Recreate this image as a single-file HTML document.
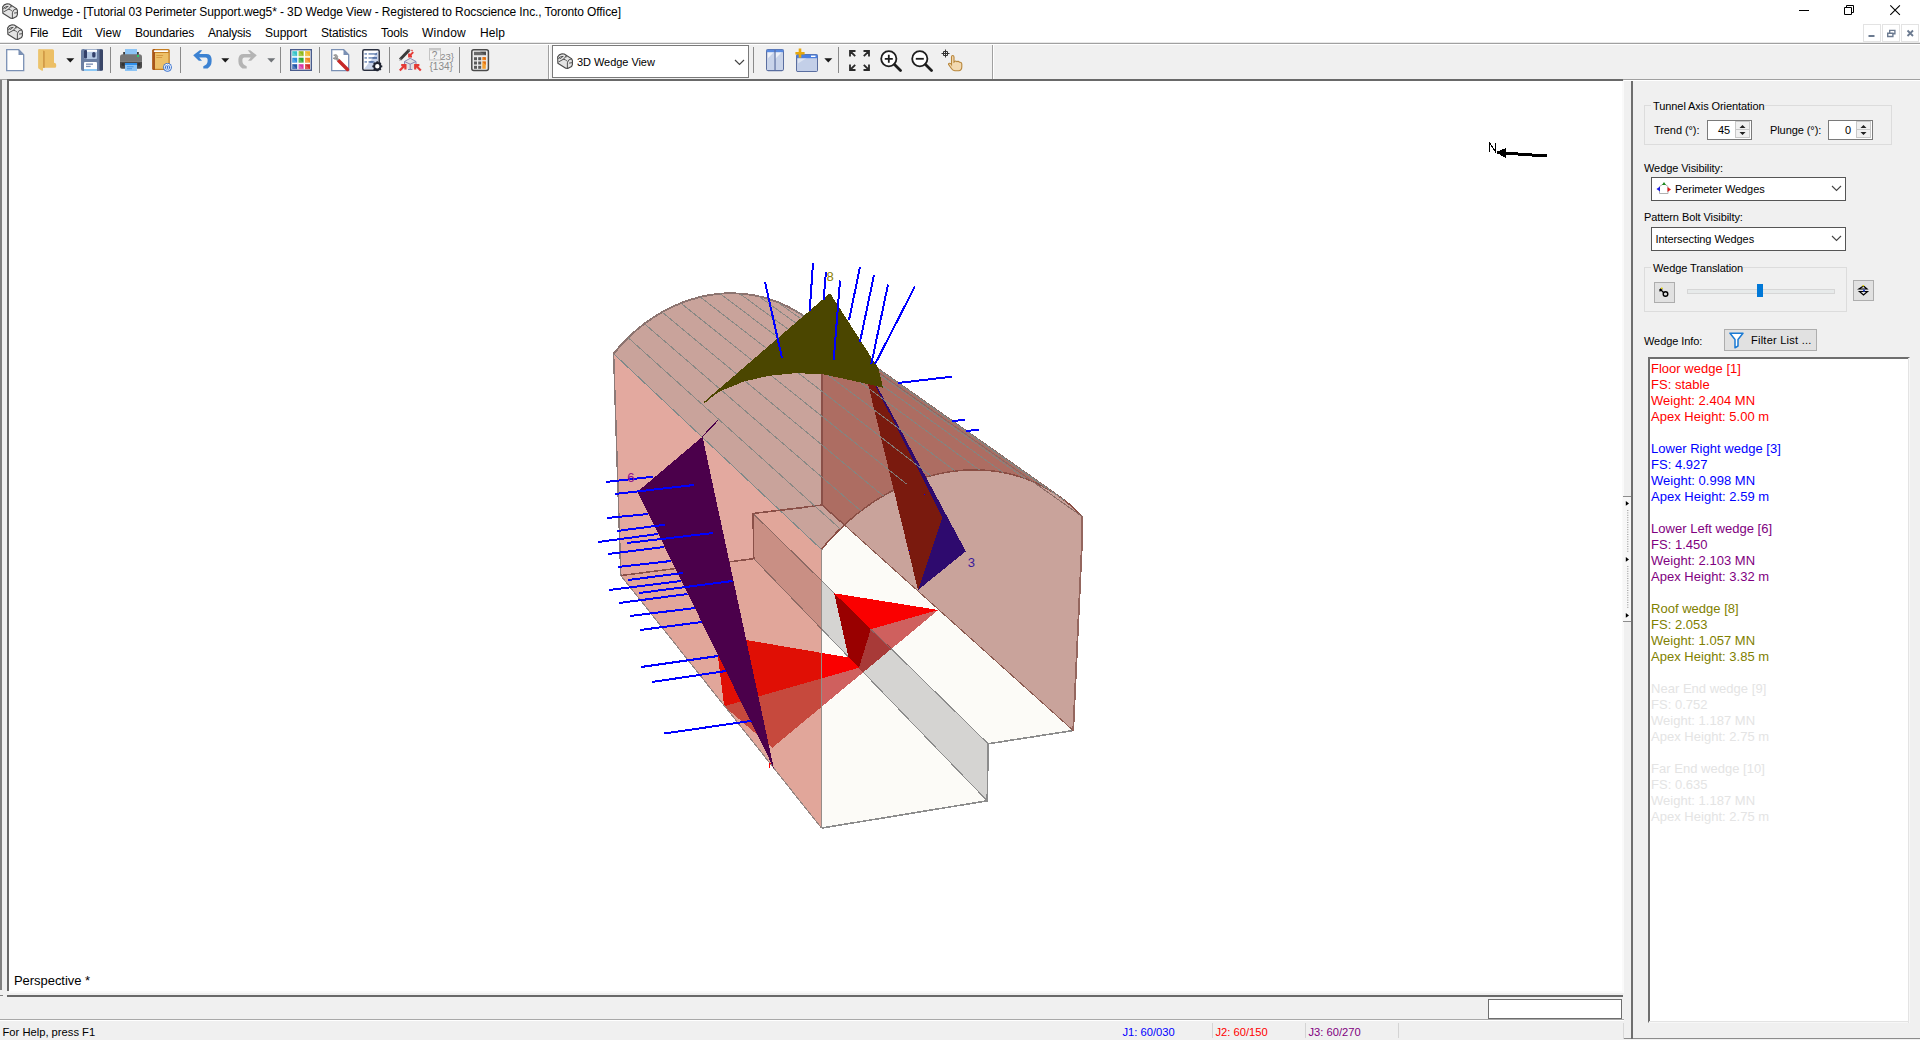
<!DOCTYPE html>
<html><head><meta charset="utf-8"><title>Unwedge</title>
<style>
html,body{margin:0;padding:0;}
body{width:1920px;height:1040px;overflow:hidden;background:#f0f0f0;font-family:"Liberation Sans", sans-serif;font-size:12px;color:#000;position:relative;}
.abs{position:absolute;white-space:nowrap;}
.mi{font-size:12px;line-height:15px;text-align:center;}
.t11{font-size:11px;line-height:14px;letter-spacing:-0.08px;}
</style></head><body>
<div class="abs" style="left:9px;top:81px;width:1613px;height:910px;background:#fff"></div>
<svg id="model" width="1614" height="912" viewBox="9 81 1614 912" style="position:absolute;left:9px;top:81px" shape-rendering="crispEdges">
<polygon points="821.5,828.1 987.2,800.8 753.8,558.7 620.8,575.5" fill="#fcfbf7"/>
<polygon points="988.2,743.8 1073.2,730.5 822.0,505.0 753.0,513.5" fill="#fcfbf7"/>
<polygon points="988.2,743.8 987.2,800.8 753.8,558.7 753.0,513.5" fill="#d5d4d2"/>
<g stroke="#8c8c8c" stroke-width="1" fill="none">
<polyline points="821.5,828.1 987.2,800.8 988.2,743.8 1073.2,730.5" stroke-width="1.6"/>
<line x1="987.2" y1="800.8" x2="753.8" y2="558.7"/>
<line x1="988.2" y1="743.8" x2="753.0" y2="513.5"/>
</g>
<polygon points="834.2,593.3 938.3,610.0 870.8,629.2" fill="#fa0000"/>
<polygon points="834.2,593.3 870.8,629.2 859.0,667.7 848.6,657.5" fill="#990000"/>
<polygon points="848.6,657.5 859.0,667.7 724.2,706.2 718.0,656.8 735.0,637.5 746.8,640.1" fill="#fa0000"/>
<polygon points="938.3,610.0 870.8,629.2 859.0,667.7 724.2,706.2 772.2,747.8" fill="rgb(179,0,0)" fill-opacity="0.62"/>
<polygon points="870.8,629.2 891.3,649.0 863.3,672.2 859.0,667.7" fill="#a83a38"/>
<line x1="870.8" y1="629.2" x2="891.3" y2="649.0" stroke="#8a6464" stroke-width="1"/>
<polygon points="844.7,525.2 1073.2,730.5 1082.4,534.0 1081.8,516.3 1081.8,516.3 1079.9,514.2 1077.9,512.1 1075.8,510.1 1073.7,508.2 1071.6,506.3 1069.5,504.4 1067.3,502.5 1065.1,500.8 1062.8,499.0 1060.5,497.3 1058.2,495.7 1055.8,494.1 1053.4,492.5 1051.0,491.0 1048.6,489.5 1046.1,488.1 1043.6,486.7 1041.0,485.4 1038.5,484.2 1035.9,483.0 1033.3,481.8 1030.6,480.7 1027.9,479.6 1025.3,478.6 1022.5,477.7 1019.8,476.8 1017.0,475.9 1014.2,475.1 1011.4,474.4 1008.6,473.7 1005.8,473.1 1002.9,472.5 1000.0,472.0 997.1,471.5 994.2,471.1 991.3,470.8 988.3,470.5 985.4,470.3 982.4,470.1 979.4,470.0 976.4,469.9 973.4,469.9 970.4,469.9 967.4,470.0 964.3,470.2 961.3,470.4 958.3,470.7 955.2,471.0 952.2,471.4 949.1,471.9 946.1,472.4 943.0,473.0 940.0,473.6 936.9,474.2 933.9,475.0 930.8,475.8 927.8,476.6 924.7,477.5 921.7,478.5 918.7,479.5 915.6,480.6 912.6,481.7 909.6,482.9 906.6,484.1 903.7,485.4 900.7,486.7 897.7,488.1 894.8,489.6 891.9,491.1 888.9,492.6 886.0,494.2 883.2,495.9 880.3,497.6 877.5,499.3 874.6,501.1 871.8,503.0 869.1,504.9 866.3,506.9 863.6,508.9 860.9,510.9 858.2,513.0 855.5,515.1 852.9,517.3 850.3,519.6 847.7,521.8" fill="#c9a39b"/>
<line x1="844.7" y1="525.2" x2="1073.2" y2="730.5" stroke="#8a5a50" stroke-width="1"/>
<polyline points="1081.8,516.3 1082.4,534.0 1073.2,730.5" stroke="#94665e" stroke-width="1.8" fill="none"/>
<polygon points="613.6,353.8 615.4,351.6 617.1,349.6 618.9,347.5 620.7,345.5 622.5,343.5 624.4,341.5 626.3,339.6 628.2,337.7 630.1,335.8 632.1,334.0 634.1,332.2 636.1,330.4 638.2,328.7 640.2,327.0 642.3,325.3 644.4,323.7 646.6,322.1 648.7,320.6 650.9,319.1 653.1,317.6 655.4,316.2 657.6,314.8 659.9,313.4 662.1,312.1 664.4,310.9 666.7,309.6 669.1,308.5 671.4,307.3 673.7,306.2 676.1,305.2 678.5,304.1 680.9,303.2 683.3,302.2 685.7,301.4 688.1,300.5 690.5,299.7 693.0,299.0 695.4,298.3 697.9,297.6 700.3,297.0 702.8,296.4 705.2,295.9 707.7,295.4 710.2,295.0 712.6,294.6 715.1,294.3 717.6,294.0 720.1,293.7 722.5,293.5 725.0,293.4 727.5,293.3 729.9,293.3 732.4,293.3 734.8,293.4 737.3,293.5 739.7,293.6 742.2,293.8 744.6,294.0 747.0,294.3 749.4,294.6 751.8,295.0 754.2,295.4 756.6,295.9 758.9,296.4 761.3,296.9 763.6,297.5 766.0,298.2 768.3,298.9 770.6,299.6 772.8,300.4 775.1,301.2 777.3,302.0 779.6,302.9 781.8,303.9 784.0,304.8 786.1,305.9 788.3,306.9 790.4,308.0 792.5,309.2 794.6,310.4 796.7,311.6 798.7,312.8 800.7,314.1 802.7,315.5 804.6,316.8 805.3,317.3 1059.0,496.2 1058.2,495.7 1055.8,494.1 1053.4,492.5 1051.0,491.0 1048.6,489.5 1046.1,488.1 1043.6,486.7 1041.0,485.4 1038.5,484.2 1035.9,483.0 1033.3,481.8 1030.6,480.7 1027.9,479.6 1025.3,478.6 1022.5,477.7 1019.8,476.8 1017.0,475.9 1014.2,475.1 1011.4,474.4 1008.6,473.7 1005.8,473.1 1002.9,472.5 1000.0,472.0 997.1,471.5 994.2,471.1 991.3,470.8 988.3,470.5 985.4,470.3 982.4,470.1 979.4,470.0 976.4,469.9 973.4,469.9 970.4,469.9 967.4,470.0 964.3,470.2 961.3,470.4 958.3,470.7 955.2,471.0 952.2,471.4 949.1,471.9 946.1,472.4 943.0,473.0 940.0,473.6 936.9,474.2 933.9,475.0 930.8,475.8 927.8,476.6 924.7,477.5 921.7,478.5 918.7,479.5 915.6,480.6 912.6,481.7 909.6,482.9 906.6,484.1 903.7,485.4 900.7,486.7 897.7,488.1 894.8,489.6 891.9,491.1 888.9,492.6 886.0,494.2 883.2,495.9 880.3,497.6 877.5,499.3 874.6,501.1 871.8,503.0 869.1,504.9 866.3,506.9 863.6,508.9 860.9,510.9 858.2,513.0 855.5,515.1 852.9,517.3 850.3,519.6 847.7,521.8 845.2,524.1 842.7,526.5 840.2,528.9 837.7,531.3 835.3,533.8 832.9,536.3 830.6,538.9 828.2,541.5 826.0,544.1 823.7,546.8 821.5,549.5" fill="#c9a39b"/>
<polygon points="822.0,326.0 805.3,317.3 1059.0,496.2 1058.2,495.7 1055.8,494.1 1053.4,492.5 1051.0,491.0 1048.6,489.5 1046.1,488.1 1043.6,486.7 1041.0,485.4 1038.5,484.2 1035.9,483.0 1033.3,481.8 1030.6,480.7 1027.9,479.6 1025.3,478.6 1022.5,477.7 1019.8,476.8 1017.0,475.9 1014.2,475.1 1011.4,474.4 1008.6,473.7 1005.8,473.1 1002.9,472.5 1000.0,472.0 997.1,471.5 994.2,471.1 991.3,470.8 988.3,470.5 985.4,470.3 982.4,470.1 979.4,470.0 976.4,469.9 973.4,469.9 970.4,469.9 967.4,470.0 964.3,470.2 961.3,470.4 958.3,470.7 955.2,471.0 952.2,471.4 949.1,471.9 946.1,472.4 943.0,473.0 940.0,473.6 936.9,474.2 933.9,475.0 930.8,475.8 927.8,476.6 924.7,477.5 921.7,478.5 918.7,479.5 915.6,480.6 912.6,481.7 909.6,482.9 906.6,484.1 903.7,485.4 900.7,486.7 897.7,488.1 894.8,489.6 891.9,491.1 888.9,492.6 886.0,494.2 883.2,495.9 880.3,497.6 877.5,499.3 874.6,501.1 871.8,503.0 869.1,504.9 866.3,506.9 863.6,508.9 860.9,510.9 858.2,513.0 855.5,515.1 852.9,517.3 850.3,519.6 847.7,521.8 844.7,525.2 822.0,505.0" fill="#ad6d62"/>
<polyline points="613.6,353.8 615.4,351.6 617.1,349.6 618.9,347.5 620.7,345.5 622.5,343.5 624.4,341.5 626.3,339.6 628.2,337.7 630.1,335.8 632.1,334.0 634.1,332.2 636.1,330.4 638.2,328.7 640.2,327.0 642.3,325.3 644.4,323.7 646.6,322.1 648.7,320.6 650.9,319.1 653.1,317.6 655.4,316.2 657.6,314.8 659.9,313.4 662.1,312.1 664.4,310.9 666.7,309.6 669.1,308.5 671.4,307.3 673.7,306.2 676.1,305.2 678.5,304.1 680.9,303.2 683.3,302.2 685.7,301.4 688.1,300.5 690.5,299.7 693.0,299.0 695.4,298.3 697.9,297.6 700.3,297.0 702.8,296.4 705.2,295.9 707.7,295.4 710.2,295.0 712.6,294.6 715.1,294.3 717.6,294.0 720.1,293.7 722.5,293.5 725.0,293.4 727.5,293.3 729.9,293.3 732.4,293.3 734.8,293.4 737.3,293.5 739.7,293.6 742.2,293.8 744.6,294.0 747.0,294.3 749.4,294.6 751.8,295.0 754.2,295.4 756.6,295.9 758.9,296.4 761.3,296.9 763.6,297.5 766.0,298.2 768.3,298.9 770.6,299.6 772.8,300.4 775.1,301.2 777.3,302.0 779.6,302.9 781.8,303.9 784.0,304.8 786.1,305.9 788.3,306.9 790.4,308.0 792.5,309.2 794.6,310.4 796.7,311.6 798.7,312.8 800.7,314.1 802.7,315.5 804.6,316.8" stroke="#8c7470" stroke-width="1.9" fill="none"/>
<polyline points="821.5,549.5 823.7,546.8 826.0,544.1 828.2,541.5 830.6,538.9 832.9,536.3 835.3,533.8 837.7,531.3 840.2,528.9 842.7,526.5 845.2,524.1 847.7,521.8 850.3,519.6 852.9,517.3 855.5,515.1 858.2,513.0 860.9,510.9 863.6,508.9 866.3,506.9 869.1,504.9 871.8,503.0 874.6,501.1 877.5,499.3 880.3,497.6 883.2,495.9 886.0,494.2 888.9,492.6 891.9,491.1 894.8,489.6 897.7,488.1 900.7,486.7 903.7,485.4 906.6,484.1 909.6,482.9 912.6,481.7 915.6,480.6 918.7,479.5 921.7,478.5 924.7,477.5 927.8,476.6 930.8,475.8 933.9,475.0 936.9,474.2 940.0,473.6 943.0,473.0 946.1,472.4 949.1,471.9 952.2,471.4 955.2,471.0 958.3,470.7 961.3,470.4 964.3,470.2 967.4,470.0 970.4,469.9 973.4,469.9 976.4,469.9 979.4,470.0 982.4,470.1 985.4,470.3 988.3,470.5 991.3,470.8 994.2,471.1 997.1,471.5 1000.0,472.0 1002.9,472.5 1005.8,473.1 1008.6,473.7 1011.4,474.4 1014.2,475.1 1017.0,475.9 1019.8,476.8 1022.5,477.7 1025.3,478.6 1027.9,479.6 1030.6,480.7 1033.3,481.8 1035.9,483.0 1038.5,484.2 1041.0,485.4 1043.6,486.7 1046.1,488.1 1048.6,489.5 1051.0,491.0 1053.4,492.5 1055.8,494.1 1058.2,495.7 1060.5,497.3 1062.8,499.0 1065.1,500.8 1067.3,502.5 1069.5,504.4 1071.6,506.3 1073.7,508.2 1075.8,510.1 1077.9,512.1 1079.9,514.2 1081.8,516.3" stroke="#8a4e44" stroke-width="1.5" fill="none"/>
<line x1="805.3" y1="317.3" x2="1059.0" y2="496.2" stroke="#8f6058" stroke-width="1.5"/>
<line x1="824.4" y1="334.3" x2="1081.8" y2="516.3" stroke="#8a6a64" stroke-width="1"/>
<g stroke="#8a5048" stroke-width="1.5" fill="none">
<polyline points="822.0,334.0 822.0,505.0 844.7,525.2"/>
<polyline points="822.0,505.0 753.0,513.5 753.8,558.7 620.8,575.5"/>
</g>
<polygon points="875.5,386.0 877.0,386.0 965.8,551.3 918.0,590.0 942.5,517.5" fill="#2e0a6e"/>
<polygon points="868.0,384.0 875.5,386.0 942.5,517.5 918.0,590.0" fill="#7a1a0e"/>
<g stroke="#828582" stroke-width="1" stroke-opacity="0.9" fill="none">
<line x1="628.2" y1="337.7" x2="840.2" y2="528.9"/>
<line x1="644.4" y1="323.7" x2="860.9" y2="510.9"/>
<line x1="662.1" y1="312.1" x2="883.2" y2="495.9"/>
<line x1="680.9" y1="303.2" x2="906.6" y2="484.1"/>
<line x1="700.3" y1="297.0" x2="930.8" y2="475.8"/>
<line x1="720.1" y1="293.7" x2="955.2" y2="471.0"/>
<line x1="739.7" y1="293.6" x2="979.4" y2="470.0"/>
<line x1="758.9" y1="296.4" x2="1002.9" y2="472.5"/>
<line x1="777.3" y1="302.0" x2="1025.3" y2="478.6"/>
<line x1="794.6" y1="310.4" x2="1046.1" y2="488.1"/>
<line x1="810.4" y1="321.2" x2="1065.1" y2="500.8"/>
</g>
<polygon points="613.6,353.8 821.5,549.5 821.5,828.1 620.8,575.5" fill="rgb(184,38,13)" fill-opacity="0.396"/>
<polyline points="613.6,353.8 620.8,575.5" stroke="#8c7a78" stroke-width="1.5" fill="none"/>
<polyline points="620.8,575.5 821.5,828.1" stroke="#948480" stroke-width="1.1" fill="none"/>
<line x1="613.6376124443461" y1="353.7617559347651" x2="821.5" y2="549.5030361304753" stroke="#7f8a8a" stroke-width="1"/>
<line x1="821.9" y1="549.5" x2="821.7" y2="828.1" stroke="#968c88" stroke-width="1.2"/>
<line x1="822" y1="629.4" x2="753.8" y2="558.7" stroke="#8c6a64" stroke-width="1"/>
<line x1="822" y1="581.1" x2="753.0" y2="513.5" stroke="#8c6a64" stroke-width="1"/>
<g stroke="#8a5048" stroke-width="1.5" fill="none">
<polyline points="808.0,507.0 753.0,513.5 753.8,558.7 620.8,575.5"/>
</g>
<polygon points="702.5,436.7 637.5,491.7 773.8,768.2" fill="#4b004b"/>
<line x1="718" y1="420" x2="702.5" y2="436.7" stroke="#4b004b" stroke-width="1.2"/>
<polygon points="830.0,293.1 878.5,368.5 883.0,387.8 866.8,383.8 841.7,378.3 821.2,373.8 793.8,373.3 768.8,375.8 743.8,381.5 720.0,391.3 711.5,397.3 704.6,403.2 703.6,402.2" fill="#4b4600"/>
<g stroke="#0000ff" stroke-width="2" fill="none">
<line x1="860" y1="267" x2="849" y2="320"/>
<line x1="874" y1="275" x2="860" y2="341.7"/>
<line x1="888" y1="284.5" x2="871.3" y2="364.2"/>
<line x1="915" y1="286.3" x2="875" y2="364.2"/>
<line x1="840" y1="280.5" x2="833.7" y2="360"/>
<line x1="826" y1="272" x2="823.5" y2="300.5"/>
<line x1="951.6" y1="376.7" x2="898.1" y2="383"/>
<line x1="965" y1="420" x2="952" y2="420.9"/>
<line x1="978.8" y1="429.8" x2="966.3" y2="431"/>
<line x1="813" y1="263" x2="809.7" y2="310.8"/>
<line x1="765" y1="282" x2="782" y2="358"/>
<line x1="606" y1="482" x2="653" y2="476.7"/>
<line x1="615" y1="494" x2="694" y2="485"/>
<line x1="607" y1="518" x2="648" y2="514"/>
<line x1="617" y1="531" x2="665" y2="524.7"/>
<line x1="598" y1="542" x2="658" y2="534"/>
<line x1="627" y1="543" x2="713" y2="533"/>
<line x1="608" y1="554" x2="664" y2="547"/>
<line x1="618" y1="567" x2="671" y2="561"/>
<line x1="628" y1="580" x2="683" y2="573"/>
<line x1="609" y1="590" x2="681" y2="581"/>
<line x1="639" y1="593" x2="732.5" y2="581"/>
<line x1="619" y1="603" x2="687.5" y2="594"/>
<line x1="630" y1="616" x2="695" y2="608"/>
<line x1="640" y1="630" x2="702" y2="622"/>
<line x1="641" y1="667" x2="718" y2="656"/>
<line x1="652" y1="682" x2="726" y2="671"/>
<line x1="664.5" y1="733.5" x2="751.5" y2="720.8"/>
</g>
<g font-family="Liberation Sans, sans-serif" font-size="13">
<text x="826.6" y="280.7" fill="#8b8000">8</text>
<text x="627.2" y="482.3" fill="#90108a">6</text>
<text x="967.8" y="566.6" fill="#3a1a9a">3</text>
</g>
<rect x="923.5" y="494" width="1" height="1" fill="#0000ff"/><rect x="908.5" y="549.5" width="1" height="1" fill="#0000ff"/>
<path d="M769.5 768v-4l1.5 -1" stroke="#ff0000" stroke-width="1" fill="none"/>
<g stroke="#000" fill="none"><path d="M1489.5 152v-9.5l6 9.5v-9.5" stroke-width="1"/><path d="M1497 152.6L1547 156" stroke-width="3"/><path d="M1496 152.2l10.5-4.4-1 10.2z" fill="#000" stroke="none"/></g>
</svg>
<div class="abs" style="left:0;top:0;width:1920px;height:43px;background:#fff"></div>
<svg class="abs" style="left:1.7px;top:2.6px" width="16.2" height="16.2" viewBox="0 0 17 17"><path d="M0.7 4.1L2.4 2 5.4 0.8 7.6 1 15.2 5.9 16.2 7.8V12.2L15.3 14.1 11.2 16.2 9.2 16 0.9 10.8Z" fill="#e4e4e4" stroke="#4a4a4a" stroke-width="1.2" stroke-linejoin="round"/><path d="M10.9 16.1V10.3Q11.3 6.6 15.3 6.1M1.4 6.3Q3.2 3 6.6 3.6M1.6 9.4L6.5 6.7Q9 6.2 10.6 8.8M6.5 6.8L9.6 3.3M9.5 2.4V4.6M12.7 10.6L15.8 10.2M2 4.6L4 5.8 6.4 3.2" fill="none" stroke="#4a4a4a" stroke-width="1"/></svg>
<div class="abs" style="left:23px;top:5.3px;font-size:12px;line-height:15px;letter-spacing:-0.1px">Unwedge - [Tutorial 03 Perimeter Support.weg5* - 3D Wedge View - Registered to Rocscience Inc., Toronto Office]</div>
<svg class="abs" style="left:1790px;top:0" width="130" height="22" viewBox="1790 0 130 22"><path d="M1799 10.5h10" stroke="#000" stroke-width="1"/><path d="M1844.5 7.5h7v7h-7zM1846.5 7.5v-2h7v7h-2" fill="none" stroke="#000" stroke-width="1"/><path d="M1890.3 5.3l9.6 9.6M1899.9 5.3l-9.6 9.6" stroke="#000" stroke-width="1.1"/></svg>
<svg class="abs" style="left:6.8px;top:23.7px" width="16.2" height="16.2" viewBox="0 0 17 17"><path d="M0.7 4.1L2.4 2 5.4 0.8 7.6 1 15.2 5.9 16.2 7.8V12.2L15.3 14.1 11.2 16.2 9.2 16 0.9 10.8Z" fill="#e4e4e4" stroke="#4a4a4a" stroke-width="1.2" stroke-linejoin="round"/><path d="M10.9 16.1V10.3Q11.3 6.6 15.3 6.1M1.4 6.3Q3.2 3 6.6 3.6M1.6 9.4L6.5 6.7Q9 6.2 10.6 8.8M6.5 6.8L9.6 3.3M9.5 2.4V4.6M12.7 10.6L15.8 10.2M2 4.6L4 5.8 6.4 3.2" fill="none" stroke="#4a4a4a" stroke-width="1"/></svg>
<div class="abs mi" style="left:30px;top:26px;letter-spacing:-0.33px">File</div>
<div class="abs mi" style="left:62px;top:26px;letter-spacing:-0.17px">Edit</div>
<div class="abs mi" style="left:95px;top:26px;letter-spacing:0.05px">View</div>
<div class="abs mi" style="left:135px;top:26px;letter-spacing:-0.17px">Boundaries</div>
<div class="abs mi" style="left:208px;top:26px;letter-spacing:-0.21px">Analysis</div>
<div class="abs mi" style="left:265px;top:26px;letter-spacing:-0.00px">Support</div>
<div class="abs mi" style="left:321px;top:26px;letter-spacing:-0.20px">Statistics</div>
<div class="abs mi" style="left:381px;top:26px;letter-spacing:-0.20px">Tools</div>
<div class="abs mi" style="left:422px;top:26px;letter-spacing:0.22px">Window</div>
<div class="abs mi" style="left:480px;top:26px;letter-spacing:0.08px">Help</div>
<div class="abs" style="left:1863px;top:24px;width:16px;height:16px;border:1px solid #e3e3e3;background:#fff"></div>
<div class="abs" style="left:1882px;top:24px;width:16px;height:16px;border:1px solid #e3e3e3;background:#fff"></div>
<div class="abs" style="left:1901px;top:24px;width:16px;height:16px;border:1px solid #e3e3e3;background:#fff"></div>
<svg class="abs" style="left:1863px;top:24px" width="57" height="18" viewBox="1863 24 57 18"><g stroke="#6b7a90" fill="none"><path d="M1868.5 36h6" stroke-width="2"/><path d="M1887.7 33.2h5.2v3.3h-5.2zM1889.7 32.7v-2.3h5.2v3.3h-1.5" stroke-width="1.4"/><path d="M1907.5 30.5l5.5 5.5M1913 30.5l-5.5 5.5" stroke-width="1.8"/></g></svg>
<div class="abs" style="left:0;top:42px;width:1920px;height:1px;background:#e8e8e8"></div>
<div class="abs" style="left:0;top:43px;width:1920px;height:1px;background:#a0a0a0"></div>
<div class="abs" style="left:0;top:44px;width:1920px;height:1px;background:#fff"></div>
<div class="abs" style="left:110px;top:47px;width:1px;height:26px;background:#8a8a8a"></div>
<div class="abs" style="left:180px;top:47px;width:1px;height:26px;background:#8a8a8a"></div>
<div class="abs" style="left:280px;top:47px;width:1px;height:26px;background:#8a8a8a"></div>
<div class="abs" style="left:319px;top:47px;width:1px;height:26px;background:#8a8a8a"></div>
<div class="abs" style="left:389px;top:47px;width:1px;height:26px;background:#8a8a8a"></div>
<div class="abs" style="left:459px;top:47px;width:1px;height:26px;background:#8a8a8a"></div>
<div class="abs" style="left:753px;top:47px;width:1px;height:26px;background:#8a8a8a"></div>
<div class="abs" style="left:838px;top:47px;width:1px;height:26px;background:#8a8a8a"></div>
<div class="abs" style="left:548px;top:45px;width:1px;height:34px;background:#a0a0a0"></div><div class="abs" style="left:549px;top:45px;width:1px;height:34px;background:#fff"></div>
<div class="abs" style="left:992px;top:45px;width:1px;height:34px;background:#a0a0a0"></div><div class="abs" style="left:993px;top:45px;width:1px;height:34px;background:#fff"></div>
<svg class="abs" style="left:6px;top:49px" width="19" height="23" viewBox="0 0 19 23"><path d="M0.7 0.7h12l5 5v16h-17z" fill="#fff" stroke="#7a90b4" stroke-width="1.3"/><path d="M12.5 0.7v5.2h5.2z" fill="#7a90b4"/></svg>
<svg class="abs" style="left:38px;top:49px" width="19" height="23" viewBox="0 0 19 23"><path d="M0.6 0.3H14.5Q16 0.3 16 1.8V13.8Q18.2 13.8 18.2 15.8V17.3Q18.2 18.8 16.7 18.8H0.6z" fill="#ecbf66"/><path d="M4.8 1.4L6.8 2.3V18.8H4.8z" fill="#d29b47"/><path d="M0.2 1Q0.2 0.2 1.2 0.3L5 1.7V21.2L4.2 22 0.2 19.2z" fill="#ecc46c"/></svg>
<svg class="abs" style="left:65.5px;top:57.8px" width="9" height="5" viewBox="0 0 9 5"><path d="M0.3 0.3h8L4.3 4.6z" fill="#1a1a1a"/></svg>
<svg class="abs" style="left:81px;top:49px" width="22" height="23" viewBox="0 0 22 23"><rect x="0" y="0" width="22" height="22" rx="2" fill="#6b7fa3"/><rect x="18.5" y="0.5" width="3.5" height="21" rx="1" fill="#3a4668"/><rect x="3" y="0.5" width="13" height="9.5" rx="1" fill="#b3c7e3"/><rect x="3" y="1" width="3" height="8.5" rx="1" fill="#33406a"/><rect x="11.2" y="3" width="3.3" height="5.5" rx="1.5" fill="#33406a"/><rect x="6" y="0.8" width="10" height="2" fill="#fff"/><rect x="3" y="13" width="13" height="9" rx="1" fill="#fff"/><rect x="3" y="20" width="13" height="2" fill="#8cc8f5"/><rect x="5" y="14.5" width="7" height="1.3" fill="#7a8db3"/><rect x="5" y="16.8" width="4.7" height="1.3" fill="#7a8db3"/></svg>
<svg class="abs" style="left:120px;top:49px" width="23" height="23" viewBox="0 0 23 23"><rect x="5" y="0" width="12" height="7" fill="#8cc4f5"/><rect x="3.2" y="3" width="1.8" height="3" fill="#3a3a3a"/><rect x="17" y="3" width="1.8" height="3" fill="#3a3a3a"/><path d="M0 8Q0 5.2 2.8 5.2H19.2Q22 5.2 22 8V12.5H0z" fill="#757575"/><path d="M0 12.5H22V18Q22 19.8 20.2 19.8H1.8Q0 19.8 0 18z" fill="#4a4a4a"/><circle cx="18" cy="7" r="1.1" fill="#19e068"/><rect x="5" y="14" width="12" height="2" fill="#2f8fea"/><rect x="5" y="16" width="12" height="6" fill="#8cc4f5"/><rect x="7" y="17.3" width="6.5" height="0.9" fill="#3f8fe0"/><rect x="7" y="19.3" width="5" height="0.9" fill="#3f8fe0"/><circle cx="3" cy="15.5" r="1.4" fill="#333"/><circle cx="19" cy="15.5" r="1.4" fill="#333"/></svg>
<svg class="abs" style="left:152px;top:49px" width="21" height="23" viewBox="0 0 21 23"><rect x="0.3" y="0" width="17.5" height="21" rx="1.5" fill="#c57e22"/><path d="M0.3 1.5Q0.3 0 1.8 0H3V21H1.8Q0.3 21 0.3 19.5z" fill="#a8561a"/><rect x="1.8" y="1.3" width="14.5" height="1.8" rx="0.8" fill="#fff"/><rect x="3" y="4" width="13.5" height="15.8" fill="#edc068"/><rect x="4.3" y="6" width="6.8" height="1" fill="#d79a43"/><rect x="4.3" y="8" width="5.8" height="1" fill="#d79a43"/><circle cx="15.5" cy="18.3" r="4.4" fill="#3b74d0"/><circle cx="15.5" cy="18.3" r="3.1" fill="none" stroke="#fff" stroke-width="1"/><rect x="14.5" y="16.3" width="2" height="4" rx="1" fill="none" stroke="#fff" stroke-width="0.8"/></svg>
<svg class="abs" style="left:192px;top:49px" width="21" height="21" viewBox="0 0 21 21"><path d="M1.2 6.3L7.8 1.2H10.2L7.2 4.9H14.5Q19.3 5 19.6 10V12.6Q19.5 17 15.6 19.6H11.3V17.2Q15.5 15.6 15.6 12.2V10.5Q15.4 8.6 13.7 8.5H7.2L10 11.8H6.8z" fill="#3c82d2"/></svg>
<svg class="abs" style="left:220.6px;top:57.8px" width="9" height="5" viewBox="0 0 9 5"><path d="M0.3 0.3h8L4.3 4.6z" fill="#1a1a1a"/></svg>
<svg class="abs" style="left:237px;top:49px" width="21" height="21" viewBox="0 0 21 21"><path d="M19.8 6.3L13.2 1.2H10.8L13.8 4.9H6.5Q1.7 5 1.4 10V12.6Q1.5 17 5.4 19.6H9.7V17.2Q5.5 15.6 5.4 12.2V10.5Q5.6 8.6 7.3 8.5H13.8L11 11.8H14.2z" fill="#b4b4b4"/></svg>
<svg class="abs" style="left:266.8px;top:57.8px" width="9" height="5" viewBox="0 0 9 5"><path d="M0.3 0.3h8L4.3 4.6z" fill="#707478"/></svg>
<svg class="abs" style="left:290px;top:49px" width="22" height="22" viewBox="0 0 22 22"><rect x="0.7" y="0.7" width="20.6" height="20.6" fill="#fff" stroke="#4a5c8c" stroke-width="1.4"/><rect x="2.2" y="2.2" width="5" height="5" fill="#35c2c8"/><path d="M2.2 2.2v5h5z" fill="#fff" fill-opacity="0.22"/><rect x="8.6" y="2.2" width="5" height="5" fill="#8fb81c"/><path d="M8.6 2.2v5h5z" fill="#fff" fill-opacity="0.22"/><rect x="15.0" y="2.2" width="5" height="5" fill="#eeb72a"/><path d="M15.0 2.2v5h5z" fill="#fff" fill-opacity="0.22"/><rect x="2.2" y="8.7" width="5" height="5" fill="#2a8ee0"/><path d="M2.2 8.7v5h5z" fill="#fff" fill-opacity="0.22"/><rect x="8.6" y="8.7" width="5" height="5" fill="#2fa834"/><path d="M8.6 8.7v5h5z" fill="#fff" fill-opacity="0.22"/><rect x="15.0" y="8.7" width="5" height="5" fill="#f08a20"/><path d="M15.0 8.7v5h5z" fill="#fff" fill-opacity="0.22"/><rect x="2.2" y="15.2" width="5" height="5" fill="#2356a8"/><path d="M2.2 15.2v5h5z" fill="#fff" fill-opacity="0.22"/><rect x="8.6" y="15.2" width="5" height="5" fill="#d838a8"/><path d="M8.6 15.2v5h5z" fill="#fff" fill-opacity="0.22"/><rect x="15.0" y="15.2" width="5" height="5" fill="#d52b2b"/><path d="M15.0 15.2v5h5z" fill="#fff" fill-opacity="0.22"/></svg>
<svg class="abs" style="left:331px;top:49px" width="19" height="23" viewBox="0 0 19 23"><path d="M0.7 0.7h12l5 5v16h-17z" fill="#fff" stroke="#7a90b4" stroke-width="1.3"/><path d="M12.5 0.7v5.2h5.2z" fill="#7a90b4"/><path d="M7.5 11.5L16.5 20.5" stroke="#c62828" stroke-width="3.4" stroke-linecap="round"/><path d="M7.2 11.2L5 8.5" stroke="#9a9a9a" stroke-width="2.4"/><path d="M2.6 6.2Q5.8 4.3 6.8 7.8L5 10.2Q2.4 10.5 2.2 9L4.3 8.6V7L2.6 6.2z" fill="#a8a8a8" stroke="#6a6a6a" stroke-width="0.5"/></svg>
<svg class="abs" style="left:362px;top:49px" width="22" height="23" viewBox="0 0 22 23"><rect x="0.8" y="0.8" width="16.4" height="20.4" rx="1.5" fill="#fff" stroke="#2a3040" stroke-width="1.5"/><path d="M2 20L16 2.2V20z" fill="#c9d4ea"/><g fill="#8aa0c4"><rect x="2.5" y="4" width="2.5" height="1.8"/><rect x="6.5" y="4" width="8.5" height="1.8"/><rect x="2.5" y="8" width="2.5" height="1.8"/><rect x="6.5" y="8" width="8.5" height="1.8"/><rect x="2.5" y="12" width="2.5" height="1.8"/><rect x="6.5" y="12" width="6" height="1.8"/></g><g fill="#5a76a8"><path d="M12 5.8L15 3.5V5.8z"/><rect x="10.5" y="8" width="4.5" height="1.8"/><rect x="7.5" y="12" width="4" height="1.8"/></g><circle cx="15.3" cy="17.3" r="3.2" fill="#fff" stroke="#1e2230" stroke-width="2"/><g stroke="#1e2230" stroke-width="1.8"><path d="M15.3 12.3v2M15.3 20.3v2M10.3 17.3h2M18.3 17.3h2M11.8 13.8l1.4 1.4M17.4 19.4l1.4 1.4M18.8 13.8l-1.4 1.4M13.2 19.4l-1.4 1.4"/></g></svg>
<svg class="abs" style="left:399px;top:49px" width="23" height="23" viewBox="0 0 23 23"><path d="M5.5 12.5L11.2 9.3 17 12.5V18L11.2 21 5.5 18z" fill="#e2e2e2" stroke="none"/><path d="M5.5 12.5L11.2 9.3 17 12.5M5.5 12.5V15M17 12.5V15M11.2 15.2V20.5M9 20.5H13.4M5.5 12.5L11.2 15.2 17 12.5" fill="none" stroke="#8a88b0" stroke-width="1"/><path d="M1 10.5L10 1.2" stroke="#3a3a3a" stroke-width="3"/><path d="M0.3 11.8L1.6 9 3 10.5z" fill="#777"/><path d="M9.3 1.8L10.8 0.4" stroke="#666" stroke-width="2.6"/><path d="M12.5 1l1 1" stroke="#e53935" stroke-width="1.2"/><path d="M14.3 3.2L10.8 6.5M10 4.5V7.5H13" fill="none" stroke="#e53935" stroke-width="1.8"/><path d="M0.8 21.5L5.2 17M2.2 16.2H6.4V20.5" fill="none" stroke="#e53935" stroke-width="2.2"/><path d="M21.8 21.5L17.4 17M20.4 16.2H16.2V20.5" fill="none" stroke="#e53935" stroke-width="2.2"/></svg>
<svg class="abs" style="left:428px;top:47px" width="28" height="26" viewBox="0 0 28 26"><rect x="1.5" y="1.5" width="11" height="11.5" fill="#f2f2f2" stroke="#c4c4c4" stroke-width="1"/><rect x="1.5" y="1.5" width="11" height="2" fill="#c8c8c8"/><text x="3.8" y="11.8" font-family="Liberation Sans, sans-serif" font-size="10" fill="#8a8a8a">?</text><text x="12.2" y="12.5" font-family="Liberation Sans, sans-serif" font-size="9.5" fill="#8a8a8a">23}</text><text x="1.5" y="23.3" font-family="Liberation Sans, sans-serif" font-size="10" fill="#8a8a8a">{134}</text></svg>
<svg class="abs" style="left:471px;top:49px" width="19" height="23" viewBox="0 0 19 23"><rect x="0.8" y="0.8" width="16.6" height="20.6" rx="2" fill="#ececec" stroke="#4a4a4a" stroke-width="1.5"/><rect x="3" y="2.8" width="12" height="3.4" fill="#6a6a6a"/><path d="M9 2.8h6v3.4z" fill="#4a4a4a"/><rect x="3.0" y="8.2" width="3" height="3" fill="#5a5a5a"/><rect x="7.2" y="8.2" width="3" height="3" fill="#5a5a5a"/><rect x="3.0" y="12.5" width="3" height="3" fill="#5a5a5a"/><rect x="7.2" y="12.5" width="3" height="3" fill="#5a5a5a"/><rect x="3.0" y="16.8" width="3" height="3" fill="#5a5a5a"/><rect x="7.2" y="16.8" width="3" height="3" fill="#5a5a5a"/><rect x="11.3" y="8.2" width="3.5" height="3" fill="#f08a20"/><rect x="11.3" y="12.5" width="3.5" height="7.3" fill="#f5a030"/><path d="M11.3 8.2h3.5v3z" fill="#e06a10"/><path d="M11.3 12.5h3.5v3.5z" fill="#e06a10"/></svg>
<div class="abs" style="left:552px;top:45px;width:195px;height:31px;border:1px solid #7a7a7a;background:#fff"></div>
<svg class="abs" style="left:556.8px;top:52.7px" width="16.2" height="16.2" viewBox="0 0 17 17"><path d="M0.7 4.1L2.4 2 5.4 0.8 7.6 1 15.2 5.9 16.2 7.8V12.2L15.3 14.1 11.2 16.2 9.2 16 0.9 10.8Z" fill="#e4e4e4" stroke="#4a4a4a" stroke-width="1.2" stroke-linejoin="round"/><path d="M10.9 16.1V10.3Q11.3 6.6 15.3 6.1M1.4 6.3Q3.2 3 6.6 3.6M1.6 9.4L6.5 6.7Q9 6.2 10.6 8.8M6.5 6.8L9.6 3.3M9.5 2.4V4.6M12.7 10.6L15.8 10.2M2 4.6L4 5.8 6.4 3.2" fill="none" stroke="#4a4a4a" stroke-width="1"/></svg>
<div class="abs" style="left:577px;top:55px;font-size:11px;line-height:14px;letter-spacing:-0.05px">3D Wedge View</div>
<svg class="abs" style="left:734px;top:59px" width="11" height="7" viewBox="0 0 11 7"><path d="M1 1l4.5 4.5L10 1" fill="none" stroke="#444" stroke-width="1.2"/></svg>
<svg class="abs" style="left:766px;top:49px" width="18" height="23" viewBox="0 0 18 23"><rect x="0.6" y="0.6" width="16.8" height="21" rx="1.5" fill="#eef1f8" stroke="#5a6ea0" stroke-width="1.2"/><path d="M1.2 21V10L8.5 2.5V21zM9 21V10L16.5 2.5V21z" fill="#c9d4ea"/><rect x="0.6" y="0.6" width="16.8" height="2.6" fill="#5a8ae0"/><rect x="8.4" y="1" width="1.2" height="20.5" fill="#5a6ea0"/></svg>
<svg class="abs" style="left:795px;top:48px" width="23" height="24" viewBox="0 0 23 24"><rect x="1.6" y="6.6" width="20.8" height="16.8" rx="1.5" fill="#dde4f2" stroke="#5a6ea0" stroke-width="1.2"/><path d="M2.2 23V16L12 9.8H22V23z" fill="#c3cfe8"/><rect x="1.6" y="6.6" width="20.8" height="3.6" fill="#4a7fe0"/><rect x="16" y="7.6" width="4.5" height="1.4" fill="#fff"/><path d="M5 0.6V9.8M0.4 5.2H9.6" stroke="#e8a80c" stroke-width="2.6"/></svg>
<svg class="abs" style="left:824px;top:57.8px" width="9" height="5" viewBox="0 0 9 5"><path d="M0.3 0.3h8L4.3 4.6z" fill="#1a1a1a"/></svg>
<svg class="abs" style="left:849px;top:50px" width="21" height="21" viewBox="0 0 21 21"><g stroke="#2a2a2a" stroke-width="1.8" fill="none"><path d="M1 6.5V1H6.5M1 1L6.2 6.2M14.5 1H20V6.5M20 1L14.8 6.2M1 14.5V20H6.5M1 20L6.2 14.8M14.5 20H20V14.5M20 20L14.8 14.8"/></g></svg>
<svg class="abs" style="left:880px;top:50px" width="22" height="22" viewBox="0 0 22 22"><circle cx="8.8" cy="8.8" r="7.6" fill="#fff" stroke="#1e1e1e" stroke-width="1.8"/><path d="M14.5 14.5L20.5 20.5" stroke="#1e1e1e" stroke-width="2.8" stroke-linecap="round"/><path d="M8.8 4.8V12.8M4.8 8.8H12.8" stroke="#1e1e1e" stroke-width="1.8"/></svg>
<svg class="abs" style="left:911px;top:50px" width="22" height="22" viewBox="0 0 22 22"><circle cx="8.8" cy="8.8" r="7.6" fill="#fff" stroke="#1e1e1e" stroke-width="1.8"/><path d="M14.5 14.5L20.5 20.5" stroke="#1e1e1e" stroke-width="2.8" stroke-linecap="round"/><path d="M4.8 8.8H12.8" stroke="#1e1e1e" stroke-width="1.8"/></svg>
<svg class="abs" style="left:941px;top:49px" width="23" height="23" viewBox="0 0 23 23"><path d="M4.5 0.5V8.5M0.5 4.5H8.5M2.5 2.5h4v4h-4z" fill="none" stroke="#333" stroke-width="1"/><path d="M10.5 8Q10.5 6.5 11.7 6.5T13 8V13L14 12.2Q15 11.8 15.8 12.6L16.8 12.4Q17.8 12.2 18.5 13.2L19.3 13.2Q20.8 13.4 20.8 15V18Q20.8 21.5 17.5 21.8H13.8Q11.8 21.6 10.6 19.8L7.6 15.6Q7.2 14.4 8.4 14.2T10.5 15.6z" fill="#f3d9b0" stroke="#b8863a" stroke-width="1.1"/></svg>
<div class="abs" style="left:0;top:79px;width:1920px;height:1px;background:#a0a0a0"></div>
<div class="abs" style="left:1624px;top:80px;width:296px;height:1px;background:#fff"></div>
<div class="abs" style="left:7px;top:79px;width:1616px;height:2px;background:#696969"></div>
<div class="abs" style="left:0;top:80px;width:2px;height:910px;background:#808080"></div>
<div class="abs" style="left:2px;top:81px;width:5px;height:912px;background:#f0f0f0"></div>
<div class="abs" style="left:7px;top:80px;width:2px;height:911px;background:#696969"></div>
<div class="abs" style="left:9px;top:991px;width:1614px;height:2px;background:#fafafa"></div>
<div class="abs" style="left:1622px;top:81px;width:2px;height:912px;background:#fafafa"></div>
<div class="abs" style="left:7px;top:995px;width:1616px;height:2px;background:#696969"></div>
<div class="abs" style="left:0px;top:995px;width:3px;height:1px;background:#808080"></div>
<div class="abs" style="left:1488px;top:999px;width:132px;height:18px;border:1px solid #6e6e6e;border-bottom-width:2px;background:#fff"></div>
<div class="abs" style="left:0;top:1019px;width:1624px;height:1px;background:#a8a8a8"></div>
<div class="abs" style="left:0;top:1020px;width:1624px;height:1px;background:#fff"></div>
<div class="abs" style="left:2.5px;top:1024.7px;font-size:11.2px;line-height:15px">For Help, press F1</div>
<div class="abs" style="left:1212px;top:1023px;width:1px;height:15px;background:#d4d4d4"></div>
<div class="abs" style="left:1305px;top:1023px;width:1px;height:15px;background:#d4d4d4"></div>
<div class="abs" style="left:1398px;top:1023px;width:1px;height:15px;background:#d4d4d4"></div>
<div class="abs" style="left:1122.5px;top:1024.7px;font-size:11.2px;line-height:15px;color:#0000ff">J1: 60/030</div>
<div class="abs" style="left:1215.5px;top:1024.7px;font-size:11.2px;line-height:15px;color:#ff0000">J2: 60/150</div>
<div class="abs" style="left:1308.5px;top:1024.7px;font-size:11.2px;line-height:15px;color:#800080">J3: 60/270</div>
<div class="abs" style="left:1623px;top:1023px;width:1px;height:16px;background:#d8d8d8"></div>
<div class="abs" style="left:1624px;top:1038px;width:296px;height:1px;background:#8c8c8c"></div>
<div class="abs" style="left:14px;top:972.8px;font-size:13px;line-height:16px;letter-spacing:-0.05px">Perspective *</div>
<div class="abs" style="left:1624px;top:81px;width:7px;height:957px;background:#f0f0f0"></div>
<div class="abs" style="left:1623px;top:496px;width:8px;height:125px;background:#f7f7f7"></div>
<div class="abs" style="left:1623px;top:496px;width:8px;height:1px;background:#8c8c8c"></div>
<div class="abs" style="left:1623px;top:621px;width:8px;height:1px;background:#8c8c8c"></div>
<svg class="abs" style="left:1623px;top:496px" width="8" height="126" viewBox="0 0 8 126"><g fill="#000"><path d="M2.8 5L6 7.4 2.8 9.8z"/><path d="M2.8 61L6 63.4 2.8 65.8z"/><path d="M2.8 117L6 119.4 2.8 121.8z"/></g><path d="M4.8 14V56M4.8 70V112" stroke="#8a8a8a" stroke-width="1" stroke-dasharray="1 1.4"/></svg>
<div class="abs" style="left:1631px;top:81px;width:2px;height:958px;background:#6e6e6e"></div>
<div class="abs" style="left:1644px;top:105px;width:246px;height:38px;border:1px solid #dcdcdc"></div><div class="abs" style="left:1651px;top:98px;width:114px;height:14px;background:#f0f0f0"></div><div class="abs t11" style="left:1653px;top:99px">Tunnel Axis Orientation</div>
<div class="abs t11" style="left:1654px;top:123px">Trend (°):</div>
<div class="abs t11" style="left:1770px;top:123px">Plunge (°):</div>
<div class="abs" style="left:1707px;top:120px;width:43px;height:18px;border:1px solid #7a7a7a;background:#fff"></div><div class="abs t11" style="left:1706px;top:123px;width:24px;text-align:right">45</div><div class="abs" style="left:1735px;top:121px;width:15px;height:17px;background:#f0f0f0;border:1px solid #c8c8c8;box-sizing:border-box"></div><div class="abs" style="left:1735px;top:129px;width:15px;height:1px;background:#c8c8c8"></div><svg class="abs" style="left:1739px;top:124px" width="7" height="12" viewBox="0 0 7 12"><path d="M0.5 4L3.5 1 6.5 4zM0.5 8L3.5 11 6.5 8z" fill="#222"/></svg>
<div class="abs" style="left:1828px;top:120px;width:43px;height:18px;border:1px solid #7a7a7a;background:#fff"></div><div class="abs t11" style="left:1827px;top:123px;width:24px;text-align:right">0</div><div class="abs" style="left:1856px;top:121px;width:15px;height:17px;background:#f0f0f0;border:1px solid #c8c8c8;box-sizing:border-box"></div><div class="abs" style="left:1856px;top:129px;width:15px;height:1px;background:#c8c8c8"></div><svg class="abs" style="left:1860px;top:124px" width="7" height="12" viewBox="0 0 7 12"><path d="M0.5 4L3.5 1 6.5 4zM0.5 8L3.5 11 6.5 8z" fill="#222"/></svg>
<div class="abs t11" style="left:1644px;top:161px">Wedge Visibility:</div>
<div class="abs" style="left:1651px;top:177px;width:193px;height:22px;border:1px solid #555;background:#fff"></div><div class="abs t11" style="left:1675px;top:181.5px">Perimeter Wedges</div><svg class="abs" style="left:1831px;top:185px" width="11" height="7" viewBox="0 0 11 7"><path d="M1 1l4.5 4.5L10 1" fill="none" stroke="#444" stroke-width="1.1"/></svg>
<svg class="abs" style="left:1656px;top:181px" width="16" height="16" viewBox="0 0 16 16"><path d="M3.5 5.5L8 2.5 12 5.5V12.5H3.5z" fill="#fff" stroke="#b0b0b0" stroke-width="1"/><path d="M8 1L10 4H6z" fill="#1e8a1e"/><path d="M0.5 8L4 5.5V10.5z" fill="#1a1ae0"/><path d="M15 8.5L11.5 6V11z" fill="#e01a1a"/></svg>
<div class="abs t11" style="left:1644px;top:210px">Pattern Bolt Visibilty:</div>
<div class="abs" style="left:1651px;top:227px;width:193px;height:22px;border:1px solid #555;background:#fff"></div><div class="abs t11" style="left:1655.5px;top:231.5px">Intersecting Wedges</div><svg class="abs" style="left:1831px;top:235px" width="11" height="7" viewBox="0 0 11 7"><path d="M1 1l4.5 4.5L10 1" fill="none" stroke="#444" stroke-width="1.1"/></svg>
<div class="abs" style="left:1644px;top:267px;width:201px;height:43px;border:1px solid #dcdcdc"></div><div class="abs" style="left:1651px;top:260px;width:92px;height:14px;background:#f0f0f0"></div><div class="abs t11" style="left:1653px;top:261px">Wedge Translation</div>
<div class="abs" style="left:1654px;top:282px;width:19px;height:19px;border:1px solid #adadad;background:#e1e1e1"></div>
<div class="abs" style="left:1853px;top:280px;width:19px;height:19px;border:1px solid #adadad;background:#e1e1e1"></div>
<svg class="abs" style="left:1658px;top:286px" width="13" height="13" viewBox="0 0 13 13"><path d="M2 3L6 7M2 3h2.5M2 3v2.5" stroke="#000" stroke-width="1.2" fill="none"/><circle cx="7.5" cy="8" r="2.3" fill="none" stroke="#000" stroke-width="1.4"/><rect x="3" y="1.5" width="1.5" height="1.5" fill="#e8d800"/></svg>
<svg class="abs" style="left:1857px;top:284px" width="13" height="13" viewBox="0 0 13 13"><path d="M2 5h8L6.5 2zM2.5 7.5h8L6.5 11z" fill="none" stroke="#000" stroke-width="1.2"/><rect x="5.5" y="1" width="1.5" height="1.5" fill="#e8d800"/><rect x="6" y="5.5" width="2" height="2" fill="#2a4ad0"/></svg>
<div class="abs" style="left:1687px;top:289px;width:146px;height:3px;border:1px solid #d6d6d6;background:#e7eaea"></div>
<div class="abs" style="left:1757px;top:284px;width:6px;height:13px;background:#0078d7"></div>
<div class="abs t11" style="left:1644px;top:334px">Wedge Info:</div>
<div class="abs" style="left:1724px;top:329px;width:91px;height:20px;border:1px solid #adadad;background:#e1e1e1"></div>
<svg class="abs" style="left:1729px;top:332px" width="15" height="17" viewBox="0 0 15 17"><path d="M1 1.2H14L9 7.5V14L6 15.8V7.5z" fill="#fff" stroke="#1a7ad4" stroke-width="1.5" stroke-linejoin="round"/></svg>
<div class="abs t11" style="left:1751px;top:333px;letter-spacing:0.25px">Filter List ...</div>
<div class="abs" style="left:1648px;top:357px;width:1260px;height:0"></div>
<div class="abs" style="left:1648px;top:357px;width:262px;height:666px;background:#fff;box-sizing:border-box;border-top:2px solid #6e6e6e;border-left:2px solid #6e6e6e;border-right:2px solid #f7f7f7;border-bottom:2px solid #f7f7f7;outline:0"></div>
<div class="abs" style="left:1908px;top:358px;width:1px;height:665px;background:#e3e3e3"></div>
<div class="abs" style="left:1649px;top:1021px;width:260px;height:1px;background:#e3e3e3"></div>
<div class="abs" style="left:1651px;top:360.8px;font-size:13px;line-height:16px;letter-spacing:0.02px"><div style="color:#ff0000">Floor wedge [1]<br>FS: stable<br>Weight: 2.404 MN<br>Apex Height: 5.00 m</div><div style="height:16px"></div><div style="color:#0000ff">Lower Right wedge [3]<br>FS: 4.927<br>Weight: 0.998 MN<br>Apex Height: 2.59 m</div><div style="height:16px"></div><div style="color:#800080">Lower Left wedge [6]<br>FS: 1.450<br>Weight: 2.103 MN<br>Apex Height: 3.32 m</div><div style="height:16px"></div><div style="color:#808000">Roof wedge [8]<br>FS: 2.053<br>Weight: 1.057 MN<br>Apex Height: 3.85 m</div><div style="height:16px"></div><div style="color:#e4e4e4">Near End wedge [9]<br>FS: 0.752<br>Weight: 1.187 MN<br>Apex Height: 2.75 m</div><div style="height:16px"></div><div style="color:#e4e4e4">Far End wedge [10]<br>FS: 0.635<br>Weight: 1.187 MN<br>Apex Height: 2.75 m</div></div>
</body></html>
